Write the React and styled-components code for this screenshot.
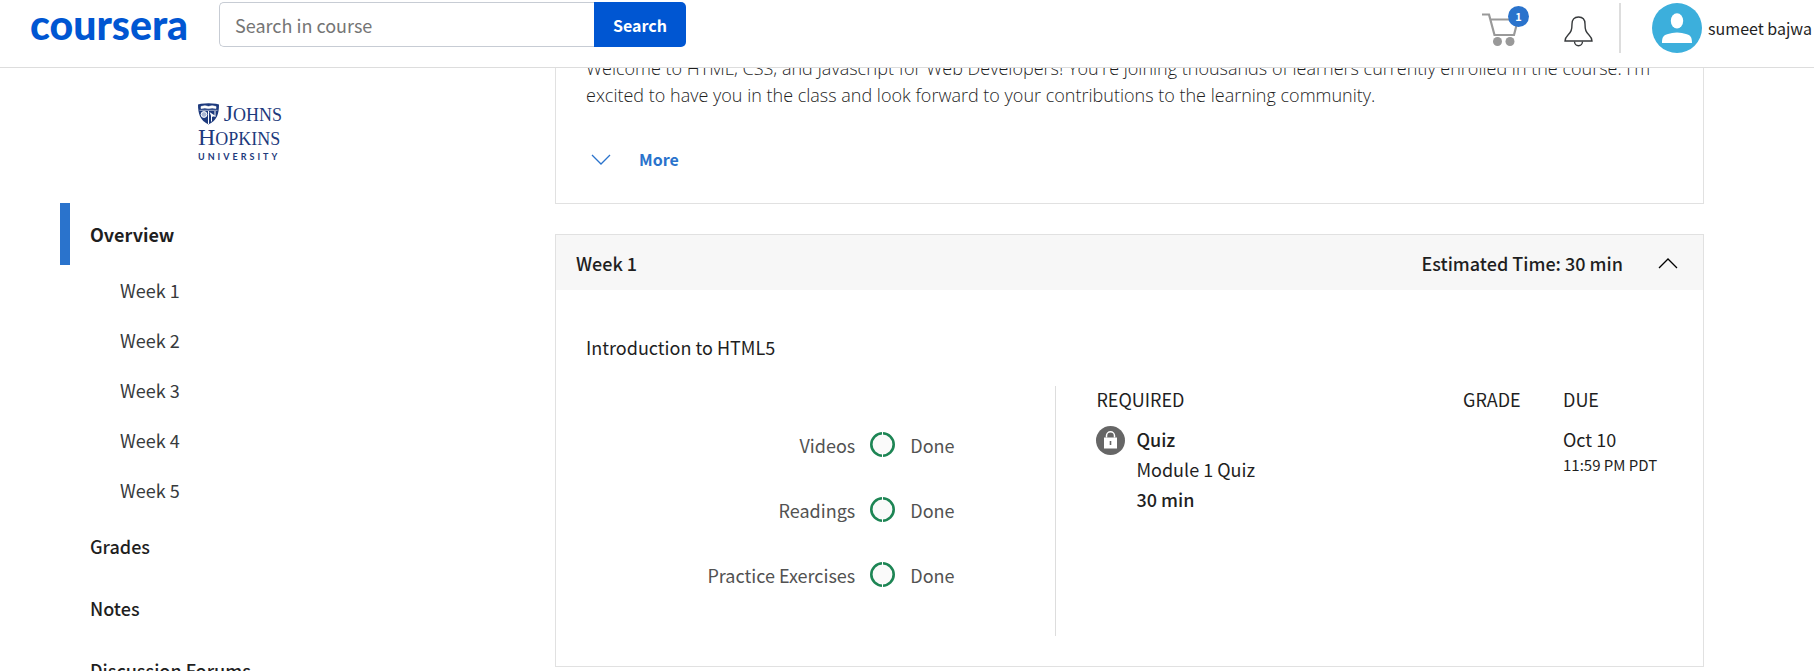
import React from "react";
import styled, { createGlobalStyle } from "styled-components";

const sans = '"Noto Sans CJK SC", "Noto Sans", sans-serif';
const prose = '"Open Sans", "Noto Sans", sans-serif';

const GlobalStyle = createGlobalStyle`
  * { box-sizing: border-box; }
  body {
    margin: 0;
    background: #fff;
    color: #1f1f1f;
    font: 400 18px/26px ${sans};
  }
  button, input { font: inherit; }
  a { color: inherit; text-decoration: none; }
`;

const Page = styled.div`
  height: 100vh;
  display: flex;
  flex-direction: column;
  overflow: hidden;
`;

const Header = styled.header`
  position: relative;
  z-index: 1;
  flex: none;
  display: flex;
  align-items: flex-start;
  height: 68px;
  padding-left: 30px;
  background: #fff;
  border-bottom: 1px solid #ddd;
`;

const Brand = styled.a`
  width: 189px;
  color: #0056d2;
  font: 900 41px/50px Lato, sans-serif;
`;

const SearchForm = styled.form`
  display: flex;
  width: 467px;
  height: 45px;
  margin-top: 2px;
`;

const SearchInput = styled.input`
  flex: 1;
  min-width: 0;
  padding: 0 15px;
  border: 1px solid #c7ccd4;
  border-right: 0;
  border-radius: 5px 0 0 5px;
  background: #fff;
  color: #1f1f1f;
  outline: none;
  &::placeholder { color: #757575; opacity: 1; }
`;

const SearchButton = styled.button`
  width: 92px;
  padding: 0;
  border: 0;
  border-radius: 0 5px 5px 0;
  background: #0056d2;
  color: #fff;
  font: 700 16px/24px ${sans};
`;

const Tools = styled.div`
  display: flex;
  align-items: center;
  height: 50px;
  margin: 3px 2px 0 auto;
`;

const IconButton = styled.button`
  position: relative;
  display: flex;
  padding: 0;
  border: 0;
  background: none;
`;

const ToolButton = styled(IconButton)`
  align-self: flex-end;
  margin-bottom: 6px;
`;

const CartButton = styled(ToolButton)`
  margin-right: 45px;
`;

const Badge = styled.span`
  position: absolute;
  top: -7px;
  left: 26px;
  width: 21px;
  height: 21px;
  border-radius: 50%;
  background: #2a73cc;
  color: #fff;
  font: 700 11px/21px ${sans};
  text-align: center;
`;

const Divider = styled.span`
  width: 2px;
  height: 50px;
  margin: 0 31px 0 26px;
  background: #ddd;
`;

const Account = styled.a`
  display: flex;
  align-items: center;
  gap: 6px;
  font-size: 16px;
`;

const Body = styled.div`
  flex: 1;
  min-height: 0;
  display: flex;
  align-items: flex-start;
`;

const Sidebar = styled.aside`
  flex: none;
  width: 555px;
  padding: 34px 0 0 60px;
`;

const University = styled.a`
  display: flex;
  flex-direction: column;
  width: 84px;
  height: 64px;
  margin: 0 0 37px 138px;
  color: #1d3a7d;
`;

const UniversityRow = styled.span`
  display: flex;
  justify-content: space-between;
  align-items: center;
  height: 24px;
  font: 400 24px/24px "Liberation Serif", serif;
  small { font-size: 18px; }
`;

const UniversityBase = styled.span`
  font: 700 9px/14px Lato, sans-serif;
  letter-spacing: 3px;
`;

const NavList = styled.ul`
  margin: 0;
  padding: 0;
  list-style: none;
`;

const SectionLink = styled.a`
  display: flex;
  align-items: center;
  height: 62px;
  padding-left: 20px;
  border-left: 10px solid ${(p) => (p.$active ? "#2a73cc" : "transparent")};
  font-weight: ${(p) => (p.$active ? 700 : 500)};
`;

const WeekLink = styled.a`
  display: flex;
  align-items: center;
  height: 50px;
  padding-left: 60px;
  color: #373a3c;
`;

const Main = styled.main`
  flex: 1;
  min-width: 0;
  margin: -42px 110px 0 0;
`;

const Card = styled.section`
  border: 1px solid #e1e1e1;
  background: #fff;
  & + & { margin-top: 30px; }
`;

const Intro = styled.div`
  padding: 28px 30px 30px;
`;

const Paragraph = styled.p`
  margin: 0 0 36px;
  font: 350 18px/27px ${prose};
`;

const MoreButton = styled.button`
  display: flex;
  align-items: center;
  gap: 28px;
  height: 28px;
  padding: 0 5px;
  border: 0;
  background: none;
  color: #2a73cc;
  font: 700 16px/24px ${sans};
`;

const CardHeader = styled.header`
  display: flex;
  align-items: center;
  gap: 35px;
  height: 55px;
  padding: 0 25px 0 20px;
  background: #f7f7f7;
  font-weight: 500;
`;

const CardTitle = styled.h2`
  flex: 1;
  margin: 0;
  font: inherit;
`;

const Module = styled.div`
  padding: 44px 30px 30px;
`;

const ModuleTitle = styled.h3`
  margin: 0 0 26px;
  font: inherit;
`;

const Columns = styled.div`
  display: grid;
  grid-template-columns: 469fr 617fr;
  min-height: 250px;
`;

const ProgressList = styled.ul`
  margin: 0;
  padding: 26px 0 0;
  list-style: none;
  color: #525252;
`;

const ProgressItem = styled.li`
  display: grid;
  grid-template-columns: 269fr 25px 145fr;
  column-gap: 15px;
  align-items: center;
  height: 65px;
`;

const ProgressLabel = styled.span`
  text-align: right;
`;

const Required = styled.div`
  padding-left: 40px;
  border-left: 1px solid #ddd;
`;

const DueTable = styled.table`
  width: 100%;
  border-collapse: collapse;
  table-layout: fixed;
  line-height: 30px;
  text-align: left;
`;

const HeadCell = styled.th`
  width: ${(p) => p.$width || "auto"};
  padding: 0 0 12px;
  font-weight: 400;
  line-height: 26px;
`;

const Cell = styled.td`
  padding: 0;
  vertical-align: top;
`;

const Assignment = styled.div`
  display: flex;
  gap: 11px;
`;

const Line = styled.div`
  font-weight: ${(p) => (p.$strong ? 500 : 400)};
`;

const DueHour = styled.div`
  font-size: 15px;
  line-height: 22px;
`;

const LockMark = styled.svg`
  flex: none;
  margin-top: 2px;
`;

const Chevron = ({ up }) => (
  <svg width="20" height="12" viewBox="0 0 20 12" fill="none" stroke="currentColor" strokeWidth="1.3" aria-hidden="true">
    <path d={up ? "M1 11 10 2l9 9" : "M1 2l9 9 9-9"} />
  </svg>
);

const CartIcon = () => (
  <svg width="37" height="34" viewBox="0 0 37 34" fill="none" stroke="#999" strokeWidth="2.2" aria-hidden="true">
    <path d="M0 1.500h7L12.500 22h19.500l4-15.500H8.500" />
    <circle cx="15.500" cy="28.500" r="4.500" fill="#999" stroke="none" />
    <circle cx="28" cy="28.500" r="4.500" fill="#999" stroke="none" />
  </svg>
);

const BellIcon = () => (
  <svg width="29" height="31" viewBox="0 0 29 31" fill="none" stroke="#373a3c" strokeWidth="1.4" aria-hidden="true">
    <path d="M14.500 1C10 1 8 4 8 8c0 6-1 8-4 11-2.500 2.500-3 4-3 6h27c0-2-.5-3.500-3-6-3-3-4-5-4-11 0-4-2-7-6.500-7Z" />
    <path d="M10.500 25.500a4 4.200 0 0 0 8 0" />
  </svg>
);

const Avatar = () => (
  <svg width="50" height="50" viewBox="0 0 50 50" aria-hidden="true">
    <circle cx="25" cy="25" r="25" fill="#3cafdc" />
    <ellipse cx="25" cy="17.800" rx="6.200" ry="7.600" fill="#fff" />
    <path d="M10 40c0-6 1.500-8 6-9 3-.7 5-1.500 9-1.500s6 .8 9 1.500c4.500 1 6 3 6 9Z" fill="#fff" />
  </svg>
);

const Shield = () => (
  <svg width="21" height="22" viewBox="0 0 21 22" aria-hidden="true">
    <path d="M0 1.500 3 .8Q10.500-.5 18 .8l3 .7c0 9-2 16-10.500 20C2 17.500 0 10.500 0 1.500Z" fill="#1d3a7d" />
    <path d="M3 3.500q4-1.500 7.500 0 3.500-1.500 7.500 0v2q-4-1-7.500 0-3.500-1-7.500 0ZM1.500 7.300h18" fill="#fff" stroke="#fff" strokeWidth=".6" />
    <circle cx="6" cy="11.500" r="2.900" fill="#aab7d2" stroke="#fff" />
    <path d="M10.500 8v13M13.500 12v6.500M17 8v6" stroke="#fff" strokeWidth="1" />
    <path d="M11.500 9l6 4-4 1Z" fill="#fff" />
  </svg>
);

const DoneRing = () => (
  <svg width="25" height="25" viewBox="0 0 25 25" fill="none" stroke="#1d8554" aria-hidden="true">
    <circle cx="12.500" cy="12.500" r="11.200" fill="#fafafa" strokeWidth="2.600" />
    <path d="M12.500 0v4M12.500 21v4" stroke="#fff" strokeWidth="1" />
  </svg>
);

const Lock = () => (
  <LockMark width="29" height="29" viewBox="0 0 29 29" aria-hidden="true">
    <circle cx="14.500" cy="14.500" r="14.500" fill="#666" />
    <path d="M10.500 11.500V9.800a4 4 0 0 1 8 0v1.700" fill="none" stroke="#fff" strokeWidth="1.500" />
    <path d="M8 11.500h13v11H8Z" fill="#fff" />
    <path d="M14.500 15v4" stroke="#666" strokeWidth="1.600" />
  </LockMark>
);

const weeks = ["Week 1", "Week 2", "Week 3", "Week 4", "Week 5"];
const progress = ["Videos", "Readings", "Practice Exercises"];

export default function App() {
  return (
    <Page>
      <GlobalStyle />
      <Header>
        <Brand href="#home">coursera</Brand>
        <SearchForm role="search" onSubmit={(e) => e.preventDefault()}>
          <SearchInput type="text" aria-label="Search in course" placeholder="Search in course" />
          <SearchButton type="submit">Search</SearchButton>
        </SearchForm>
        <Tools>
          <CartButton type="button" aria-label="Cart">
            <CartIcon />
            <Badge>1</Badge>
          </CartButton>
          <ToolButton type="button" aria-label="Notifications">
            <BellIcon />
          </ToolButton>
          <Divider />
          <Account href="#account">
            <Avatar />
            sumeet bajwa
          </Account>
        </Tools>
      </Header>
      <Body>
        <Sidebar>
          <University href="#university">
            <UniversityRow>
              <Shield />
              <span>J<small>OHNS</small></span>
            </UniversityRow>
            <UniversityRow>
              <span>H<small>OPKINS</small></span>
            </UniversityRow>
            <UniversityBase>UNIVERSITY</UniversityBase>
          </University>
          <nav aria-label="Course">
            <NavList>
              <li>
                <SectionLink href="#overview" $active>Overview</SectionLink>
                <NavList>
                  {weeks.map((week) => (
                    <li key={week}><WeekLink href="#week">{week}</WeekLink></li>
                  ))}
                </NavList>
              </li>
              <li><SectionLink href="#grades">Grades</SectionLink></li>
              <li><SectionLink href="#notes">Notes</SectionLink></li>
              <li><SectionLink href="#forums">Discussion Forums</SectionLink></li>
            </NavList>
          </nav>
        </Sidebar>
        <Main>
          <Card>
            <Intro>
              <Paragraph>
                Welcome to HTML, CSS, and Javascript for Web Developers! You're joining thousands of learners
                currently enrolled in the course. I'm excited to have you in the class and look forward to your
                contributions to the learning community.
              </Paragraph>
              <MoreButton type="button"><Chevron />More</MoreButton>
            </Intro>
          </Card>
          <Card>
            <CardHeader>
              <CardTitle>Week 1</CardTitle>
              <span>Estimated Time: 30 min</span>
              <IconButton type="button" aria-label="Collapse week"><Chevron up /></IconButton>
            </CardHeader>
            <Module>
              <ModuleTitle>Introduction to HTML5</ModuleTitle>
              <Columns>
                <ProgressList>
                  {progress.map((label) => (
                    <ProgressItem key={label}>
                      <ProgressLabel>{label}</ProgressLabel>
                      <DoneRing />
                      <span>Done</span>
                    </ProgressItem>
                  ))}
                </ProgressList>
                <Required>
                  <DueTable>
                    <thead>
                      <tr>
                        <HeadCell>REQUIRED</HeadCell>
                        <HeadCell $width="100px">GRADE</HeadCell>
                        <HeadCell $width="110px">DUE</HeadCell>
                      </tr>
                    </thead>
                    <tbody>
                      <tr>
                        <Cell>
                          <Assignment>
                            <Lock />
                            <div>
                              <Line $strong>Quiz</Line>
                              <Line>Module 1 Quiz</Line>
                              <Line $strong>30 min</Line>
                            </div>
                          </Assignment>
                        </Cell>
                        <Cell />
                        <Cell>
                          <Line>Oct 10</Line>
                          <DueHour>11:59 PM PDT</DueHour>
                        </Cell>
                      </tr>
                    </tbody>
                  </DueTable>
                </Required>
              </Columns>
            </Module>
          </Card>
        </Main>
      </Body>
    </Page>
  );
}
